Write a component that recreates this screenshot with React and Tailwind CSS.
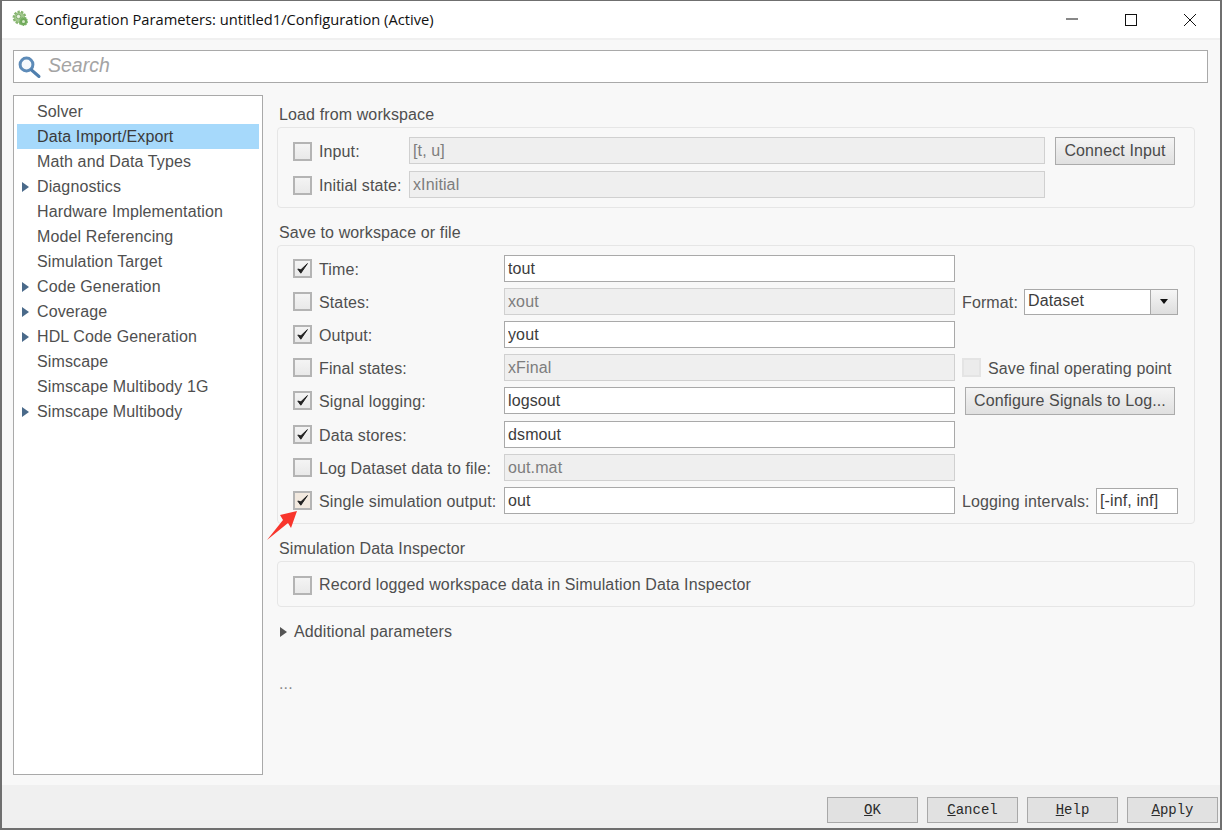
import { useState } from "react";

const tree = [
  { name: "Solver" },
  { name: "Data Import/Export", active: true },
  { name: "Math and Data Types" },
  { name: "Diagnostics", arrow: true },
  { name: "Hardware Implementation" },
  { name: "Model Referencing" },
  { name: "Simulation Target" },
  { name: "Code Generation", arrow: true },
  { name: "Coverage", arrow: true },
  { name: "HDL Code Generation", arrow: true },
  { name: "Simscape" },
  { name: "Simscape Multibody 1G" },
  { name: "Simscape Multibody", arrow: true },
];

const CheckBox = ({ checked, disabled, tint, className = "" }) => (
  <div className={`w-[19px] h-[19px] shrink-0 flex items-center justify-center border-2 ${disabled ? "border-[#e4e4e4] bg-[#ececec]" : "border-[#b4b4b4]"} ${tint ? "bg-[#f2e9df]" : disabled ? "" : "bg-gradient-to-b from-[#f4f4f4] to-[#e9e9e9]"} ${className}`}>
    {checked && (
      <svg width="13" height="13" viewBox="0 0 13 13">
        <path d="M1.8 7 L4.8 11.2 L11.4 1.6 L4.9 7.8 Z" fill="#222" stroke="#222" strokeWidth="1" strokeLinejoin="round" />
      </svg>
    )}
  </div>
);

const Field = ({ value, disabled, className = "" }) => (
  <input
    readOnly
    value={value}
    className={`h-[27px] pl-[3px] outline-none border text-[16px] ${disabled ? "bg-[#efefef] border-[#d0d0d0] text-[#7d7d7d]" : "bg-white border-[#a9a9a9] text-[#3c3c3c]"} ${className}`}
  />
);

const Btn = ({ children, className = "" }) => (
  <button className={`h-[28px] border border-[#ababab] bg-gradient-to-b from-[#f4f4f4] to-[#e0e0e0] text-[#4a4a4a] text-[16px] ${className}`}>
    {children}
  </button>
);

const Row = ({ label, value, checked, disabled, tint, className = "", children }) => (
  <div className={`flex items-center h-[27px] ${className}`}>
    <CheckBox checked={checked} tint={tint} />
    <span className="ml-[7px] w-[185px] pt-[2px] whitespace-nowrap">{label}</span>
    <Field value={value} disabled={disabled} className="w-[451px]" />
    <div className="ml-[7px] w-[216px] flex items-center">{children}</div>
  </div>
);

const BottomBtn = ({ u, rest }) => (
  <button className="w-[91px] h-[26px] border border-[#a8a8a8] bg-[#e1e1e1] text-[14px] tracking-normal text-[#2a2a2a] font-['Liberation_Mono',monospace]">
    <span className="underline">{u}</span>{rest}
  </button>
);

const App = () => {
  const [selected] = useState("Data Import/Export");

  return (
    <div className="w-[1222px] h-[830px] flex flex-col border-2 border-t border-b-2 border-[#6f6f6f] bg-[#f8f8f8] text-[16px] tracking-[0.12px] text-[#4f4f4f] font-['Liberation_Sans',Arial,sans-serif] overflow-hidden">
      {/* title bar */}
      <div className="h-[37px] shrink-0 bg-white flex items-center text-[#111] font-['Open_Sans',sans-serif] text-[14.7px] tracking-normal">
        <svg className="ml-[10px]" width="19" height="19" viewBox="0 0 19 19">
          <circle cx="7.5" cy="7.5" r="5.6" fill="#a3c88f" stroke="#86b46f" strokeWidth="2.6" strokeDasharray="2.2 1.2" />
          <circle cx="7.5" cy="7.5" r="4.6" fill="#a3c88f" />
          <circle cx="6.5" cy="6.5" r="2.2" fill="#e8f1df" stroke="#6c9f58" strokeWidth="0.8" />
          <circle cx="11.5" cy="11.5" r="3.7" fill="#6fa85a" stroke="#7db568" strokeWidth="1.6" strokeDasharray="1.6 0.9" />
          <circle cx="11.5" cy="11.5" r="1.5" fill="#d6e8c8" />
        </svg>
        <span className="ml-[4px] whitespace-nowrap">Configuration Parameters: untitled1/Configuration (Active)</span>
        <div className="ml-auto flex items-center">
          <svg width="14" height="14" viewBox="0 0 14 14" className="mr-[45px] -translate-y-px"><path d="M1 7h12" stroke="#111" strokeWidth="1" /></svg>
          <svg width="14" height="14" viewBox="0 0 14 14" className="mr-[45px]"><rect x="1.5" y="1.5" width="11" height="11" fill="none" stroke="#111" /></svg>
          <svg width="14" height="14" viewBox="0 0 14 14" className="mr-[23px]"><path d="M1 1l12 12M13 1L1 13" stroke="#111" strokeWidth="1" /></svg>
        </div>
      </div>
      <div className="h-[2px] shrink-0 bg-[#f0f0f0]" />

      {/* search */}
      <div className="ml-[11px] mr-[12px] mt-[10px] h-[33px] shrink-0 border border-[#a9a9a9] bg-white flex items-center">
        <svg className="ml-[4px]" width="24" height="24" viewBox="0 0 24 24">
          <circle cx="8.5" cy="9.5" r="6.4" fill="#f6f9fc" stroke="#5d8bb8" strokeWidth="3" />
          <path d="M13.5 15 L21 21.5" stroke="#4f7fae" strokeWidth="3" strokeLinecap="round" />
        </svg>
        <span className="ml-[6px] -mt-[2px] text-[19.5px] tracking-normal italic text-[#a4a4a4]">Search</span>
      </div>

      <div className="flex flex-1 min-h-0">
        {/* tree */}
        <div className="ml-[11px] mt-[12px] mb-[10px] w-[250px] shrink-0 border border-[#a9a9a9] bg-white pt-[3px] px-[3px]">
          {tree.map((t) => (
            <div key={t.name} className={`relative h-[25px] flex items-center pl-[20px] whitespace-nowrap ${t.name === selected ? "bg-[#a6d9fb] text-[#3a3a3a]" : ""}`}>
              {t.arrow && <span className="absolute left-[5px] top-[8px] w-0 h-0 border-y-[5px] border-y-transparent border-l-[7px] border-l-[#4a6a8a]" />}
              {t.name}
            </div>
          ))}
        </div>

        {/* params */}
        <div className="relative flex-1 ml-[14px] mr-[25px] min-w-0">
          <div className="pl-[2px] mt-[23px] leading-[18px]">Load from workspace</div>
          <div className="mt-[3px] h-[81px] border border-[#e6e6e6] rounded-[4px] pl-[15px] pt-[9px] flex flex-col gap-[7px]">
            <div className="flex items-center h-[27px]">
              <CheckBox className="mt-[2px]" />
              <span className="ml-[7px] w-[90px] pt-[2px]">Input:</span>
              <Field value="[t, u]" disabled className="w-[636px]" />
              <Btn className="ml-[10px] w-[120px]">Connect Input</Btn>
            </div>
            <div className="flex items-center h-[27px]">
              <CheckBox className="mt-[2px]" />
              <span className="ml-[7px] w-[90px] pt-[2px] whitespace-nowrap">Initial state:</span>
              <Field value="xInitial" disabled className="w-[636px]" />
            </div>
          </div>

          <div className="pl-[2px] mt-[16px] leading-[18px]">Save to workspace or file</div>
          <div className="mt-[3px] h-[279px] border border-[#e6e6e6] rounded-[4px] pl-[15px] pt-[9px] flex flex-col gap-[6px]">
            <Row label="Time:" value="tout" checked />
            <Row label="States:" value="xout" disabled>
              <span className="pt-[2px]">Format:</span>
              <div className="ml-auto w-[154px] h-[26px] border border-[#a9a9a9] bg-white flex text-[#3c3c3c]">
                <span className="flex-1 pl-[3px] leading-[22px]">Dataset</span>
                <div className="w-[27px] border-l border-[#a9a9a9] bg-gradient-to-b from-[#f6f6f6] to-[#dedede] flex items-center justify-center">
                  <span className="w-0 h-0 border-x-[4px] border-x-transparent border-t-[5px] border-t-[#111]" />
                </div>
              </div>
            </Row>
            <Row label="Output:" value="yout" checked />
            <Row label="Final states:" value="xFinal" disabled>
              <CheckBox disabled />
              <span className="ml-[7px] pt-[2px] whitespace-nowrap">Save final operating point</span>
            </Row>
            <Row label="Signal logging:" value="logsout" checked>
              <Btn className="ml-[3px] w-[210px]">Configure Signals to Log...</Btn>
            </Row>
            <Row label="Data stores:" value="dsmout" checked className="mt-[1px]" />
            <Row label="Log Dataset data to file:" value="out.mat" disabled />
            <Row label="Single simulation output:" value="out" checked tint>
              <span className="pt-[2px] whitespace-nowrap">Logging intervals:</span>
              <Field value="[-inf, inf]" className="ml-auto w-[82px] !h-[26px]" />
            </Row>
          </div>

          <div className="pl-[2px] mt-[16px] leading-[18px]">Simulation Data Inspector</div>
          <div className="mt-[3px] h-[46px] border border-[#e6e6e6] rounded-[4px] pl-[15px] flex items-center">
            <CheckBox className="mt-[2px]" />
            <span className="ml-[7px] pt-[2px]">Record logged workspace data in Simulation Data Inspector</span>
          </div>

          <div className="mt-[16px] pl-[3px] flex items-center leading-[18px]">
            <span className="w-0 h-0 border-y-[5px] border-y-transparent border-l-[7px] border-l-[#555]" />
            <span className="ml-[7px]">Additional parameters</span>
          </div>
          <div className="mt-[34px] pl-[2px] text-[#8a8a8a] leading-[18px]">...</div>

          {/* red annotation arrow */}
          <svg className="absolute left-[-12px] top-[426px]" width="36" height="36" viewBox="0 0 36 36">
            <path d="M32 2 L15 6 L18 11 L2 31 L23 14 L26 19 Z" fill="#f8352c" />
          </svg>
        </div>
      </div>

      {/* footer */}
      <div className="h-[43px] shrink-0 bg-[#f0f0f0] flex items-start justify-end gap-[9px] pt-[12px] pr-[2px]">
        <BottomBtn u="O" rest="K" />
        <BottomBtn u="C" rest="ancel" />
        <BottomBtn u="H" rest="elp" />
        <BottomBtn u="A" rest="pply" />
      </div>
    </div>
  );
};

export default App;
